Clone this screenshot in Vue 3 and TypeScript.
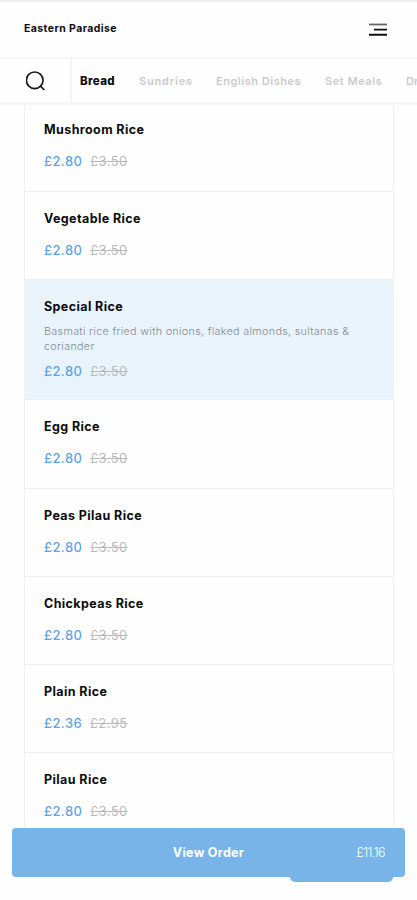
<script setup lang="ts">
interface Dish {
  name: string
  price: string
  was: string
  description?: string
  kind?: string
}

const categories: { label: string; kind: string }[] = [
  { label: 'Bread', kind: 'active' },
  { label: 'Sundries', kind: 'sundries' },
  { label: 'English Dishes', kind: 'english' },
  { label: 'Set Meals', kind: 'meals' },
  { label: 'Drinks', kind: 'drinks' },
]

const dishes: Dish[] = [
  { name: 'Mushroom Rice', price: '£2.80', was: '£3.50' },
  { name: 'Vegetable Rice', price: '£2.80', was: '£3.50' },
  {
    name: 'Special Rice',
    price: '£2.80',
    was: '£3.50',
    description: 'Basmati rice fried with onions, flaked almonds, sultanas & coriander',
    kind: 'selected',
  },
  { name: 'Egg Rice', price: '£2.80', was: '£3.50' },
  { name: 'Peas Pilau Rice', price: '£2.80', was: '£3.50' },
  { name: 'Chickpeas Rice', price: '£2.80', was: '£3.50' },
  { name: 'Plain Rice', price: '£2.36', was: '£2.95' },
  { name: 'Pilau Rice', price: '£2.80', was: '£3.50' },
]
</script>

<template>
  <div class="screen">
    <header class="header">
      <span class="brand">Eastern Paradise</span>
      <svg class="menu" viewBox="0 0 18 14" width="18" height="14">
        <path d="M0 1.5H18" stroke="#666" stroke-width="1.8" />
        <path d="M5 6.6H18M0 11.7H18" stroke="#111" stroke-width="1.9" />
      </svg>
    </header>
    <nav class="nav">
      <div class="search">
        <svg viewBox="0 0 20 20" width="20" height="20" fill="none" stroke="#181818" stroke-width="1.7">
          <circle cx="8.7" cy="9.3" r="8.3" />
          <path d="M14.2 14.8L18.4 19" />
        </svg>
      </div>
      <div class="tabs">
        <span v-for="c in categories" :key="c.label" class="tab" :class="c.kind">{{ c.label }}</span>
      </div>
    </nav>
    <main class="list">
      <article v-for="d in dishes" :key="d.name" class="dish" :class="d.kind">
        <h2 class="name">{{ d.name }}</h2>
        <p v-if="d.description" class="description">{{ d.description }}</p>
        <div class="prices">
          <span class="price">{{ d.price }}</span>
          <s class="was">{{ d.was }}</s>
        </div>
      </article>
    </main>
    <div class="basket-tab"></div>
    <button class="order">
      <span></span>
      <span class="order-label">View Order</span>
      <span class="total">£11.16</span>
    </button>
  </div>
</template>

<style>
body {
  background: #fff;
  overflow: hidden;
}
</style>

<style scoped>
.screen {
  position: relative;
  box-sizing: border-box;
  width: 417px;
  height: 900px;
  overflow: hidden;
  background: #fefefe;
  border-top: 2px solid #eeeeee;
  font-family: Inter, 'Liberation Sans', sans-serif;
  color: #0c0c0c;
}
.header {
  box-sizing: border-box;
  height: 57px;
  padding: 0 30px 3px 24px;
  display: flex;
  align-items: center;
  justify-content: space-between;
  border-bottom: 2px solid #f5f5f5;
}
.brand {
  font-size: 10.5px;
  font-weight: 700;
  letter-spacing: 0.42px;
}
.menu {
  display: block;
  margin-top: 3px;
}
.nav {
  box-sizing: border-box;
  height: 46px;
  display: flex;
  border-bottom: 3px solid #f6f6f6;
}
.search {
  box-sizing: border-box;
  flex: none;
  width: 72px;
  padding: 12px 0 0 26px;
  border-right: 2px solid #f5f5f5;
}
.search svg {
  display: block;
}
.tabs {
  flex: 1;
  min-width: 0;
  overflow: hidden;
  display: flex;
  align-items: center;
  gap: 24px;
  padding-left: 8px;
  white-space: nowrap;
}
.tab {
  flex: none;
  font-size: 11px;
  font-weight: 600;
  color: #cbcbcb;
}
.active {
  width: 35px;
  font-size: 11.5px;
  font-weight: 800;
  letter-spacing: 0.35px;
  color: #0c0c0c;
}
.sundries {
  width: 53px;
  letter-spacing: 0.8px;
}
.english {
  width: 85px;
  letter-spacing: 0.53px;
}
.meals {
  width: 57px;
  letter-spacing: 0.55px;
}
.list {
  width: 368px;
  margin-left: 24px;
  border: solid #f0f0f0;
  border-width: 0 1px;
}
.dish {
  box-sizing: border-box;
  height: 88.25px;
  padding: 17px 20px 0 19px;
  border-bottom: 1.5px solid #eeeeee;
}
.dish:first-child {
  height: 86.5px;
  padding-top: 15px;
}
.selected {
  height: 120.5px;
  background: #e8f3fb;
}
.name {
  margin: 0;
  font-size: 12.5px;
  line-height: 20px;
  font-weight: 700;
  letter-spacing: 0.4px;
}
.description {
  margin: 7px 0 0;
  font-size: 10.8px;
  line-height: 15.5px;
  font-weight: 300;
  letter-spacing: 0.3px;
  color: #848b90;
}
.prices {
  display: flex;
  gap: 8px;
  margin-top: 11px;
  font-size: 13px;
  line-height: 20px;
  letter-spacing: 0.4px;
}
.selected .prices {
  margin-top: 6px;
}
.price {
  color: #5ba6e8;
  font-weight: 500;
}
.was {
  color: #b9b9b9;
}
.basket-tab {
  position: absolute;
  left: 290px;
  top: 840px;
  width: 103px;
  height: 40px;
  border-radius: 5px;
  background: #78b4e8;
}
.order {
  position: absolute;
  left: 12px;
  top: 826px;
  width: 393px;
  height: 49px;
  box-sizing: border-box;
  padding: 0 20px;
  border: 0;
  border-radius: 4px;
  background: #78b4e8;
  color: #fff;
  font-family: inherit;
  display: grid;
  grid-template-columns: 1fr auto 1fr;
  align-items: center;
}
.order-label {
  font-size: 12.5px;
  font-weight: 700;
  letter-spacing: 0.3px;
}
.total {
  font-size: 12.5px;
  font-weight: 300;
  letter-spacing: -0.6px;
  text-align: right;
}
</style>
